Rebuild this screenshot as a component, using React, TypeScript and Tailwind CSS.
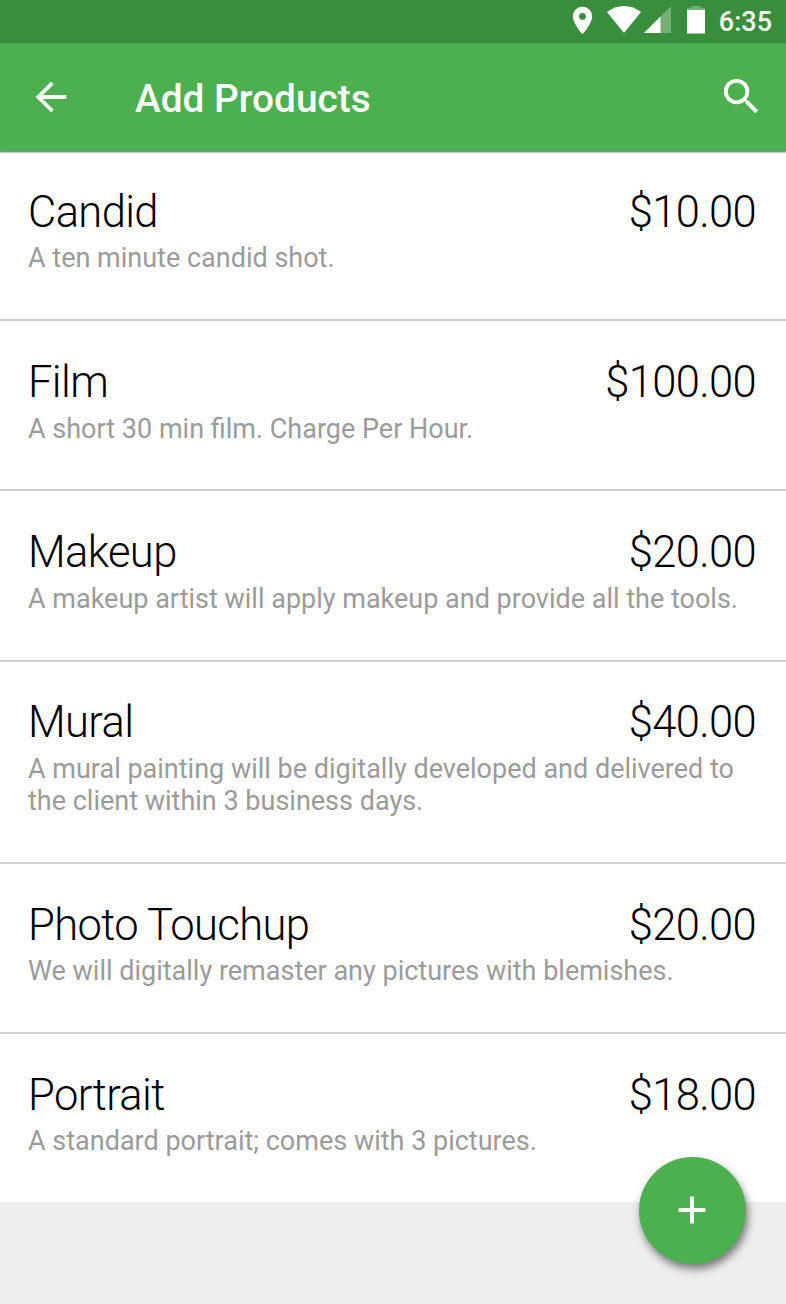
import { MdArrowBack, MdSearch, MdAdd, MdLocationOn } from 'react-icons/md';

interface Product {
  name: string;
  price: string;
  description: string;
}

const products: Product[] = [
  { name: 'Candid', price: '$10.00', description: 'A ten minute candid shot.' },
  { name: 'Film', price: '$100.00', description: 'A short 30 min film. Charge Per Hour.' },
  {
    name: 'Makeup',
    price: '$20.00',
    description: 'A makeup artist will apply makeup and provide all the tools.',
  },
  {
    name: 'Mural',
    price: '$40.00',
    description:
      'A mural painting will be digitally developed and delivered to the client within 3 business days.',
  },
  {
    name: 'Photo Touchup',
    price: '$20.00',
    description: 'We will digitally remaster any pictures with blemishes.',
  },
  {
    name: 'Portrait',
    price: '$18.00',
    description: 'A standard portrait; comes with 3 pictures.',
  },
];

function StatusBar() {
  return (
    <div className="flex h-[43px] items-start bg-[#388e3c] pt-[6px] pr-[14px] text-white">
      <MdLocationOn className="-mt-[2px] ml-auto size-[33px]" />
      <svg className="ml-[8px] h-[27px] w-[34px]" viewBox="0 0 34 27" fill="currentColor">
        <path d="M0 6C10-2 24-2 34 6L17 27Z" />
      </svg>
      <svg className="ml-[3px] h-[27px] w-[27px]" viewBox="0 0 27 27" fill="currentColor">
        <path d="M0 27L27 0V27Z" opacity="0.3" />
        <path d="M0 27L16.500 10.500V27Z" />
      </svg>
      <svg className="ml-4 h-[28px] w-[18px]" viewBox="0 0 18 28" fill="currentColor">
        <path d="M4.500 0H13.500V2H18V4H0V2H4.500Z" opacity="0.3" />
        <path d="M0 4H18V27.500H0Z" />
      </svg>
      <span className="ml-[13.500px] pt-[3px] text-[27px] leading-[27px] font-medium">6:35</span>
    </div>
  );
}

function AppBar() {
  return (
    <header className="relative flex h-[108px] items-center bg-[#4caf50] pr-[21.5px] pl-[28px] text-white shadow-[0_0_2px_1px_rgba(0,0,0,0.65)] [clip-path:inset(0_0_-4px_0)]">
      <MdArrowBack className="size-[46px]" />
      <h1 className="ml-[61px] flex-1 pt-[3px] text-[38.8px] leading-[46px] font-medium">
        Add Products
      </h1>
      <MdSearch className="mb-[1px] size-[47px]" />
    </header>
  );
}

function ProductRow({ product }: { product: Product }) {
  return (
    <li className="border-b-2 border-[#cfcfcf] px-[28px] pt-[32.8px] pb-[44.8px] last:border-b-0">
      <div className="flex justify-between pr-[2px] text-[43.5px] leading-[58px] font-light tracking-[-0.62px] text-black">
        <span>{product.name}</span>
        <span>{product.price}</span>
      </div>
      <p className="pt-[0.6px] text-[27px] leading-[32px] text-[#9b9b9b]">{product.description}</p>
    </li>
  );
}

export default function App() {
  return (
    <div className="relative h-[1304px] w-[786px] overflow-hidden bg-[#eeeeee] font-[Roboto,sans-serif]">
      <StatusBar />
      <AppBar />
      <ul className="bg-white">
        {products.map((product) => (
          <ProductRow key={product.name} product={product} />
        ))}
      </ul>
      <button className="absolute right-[40px] bottom-[40px] flex size-[107.5px] items-center justify-center rounded-full bg-[#4caf50] text-white shadow-[2px_5px_9px_rgba(0,0,0,0.5)]">
        <MdAdd className="size-[46px]" />
      </button>
    </div>
  );
}
